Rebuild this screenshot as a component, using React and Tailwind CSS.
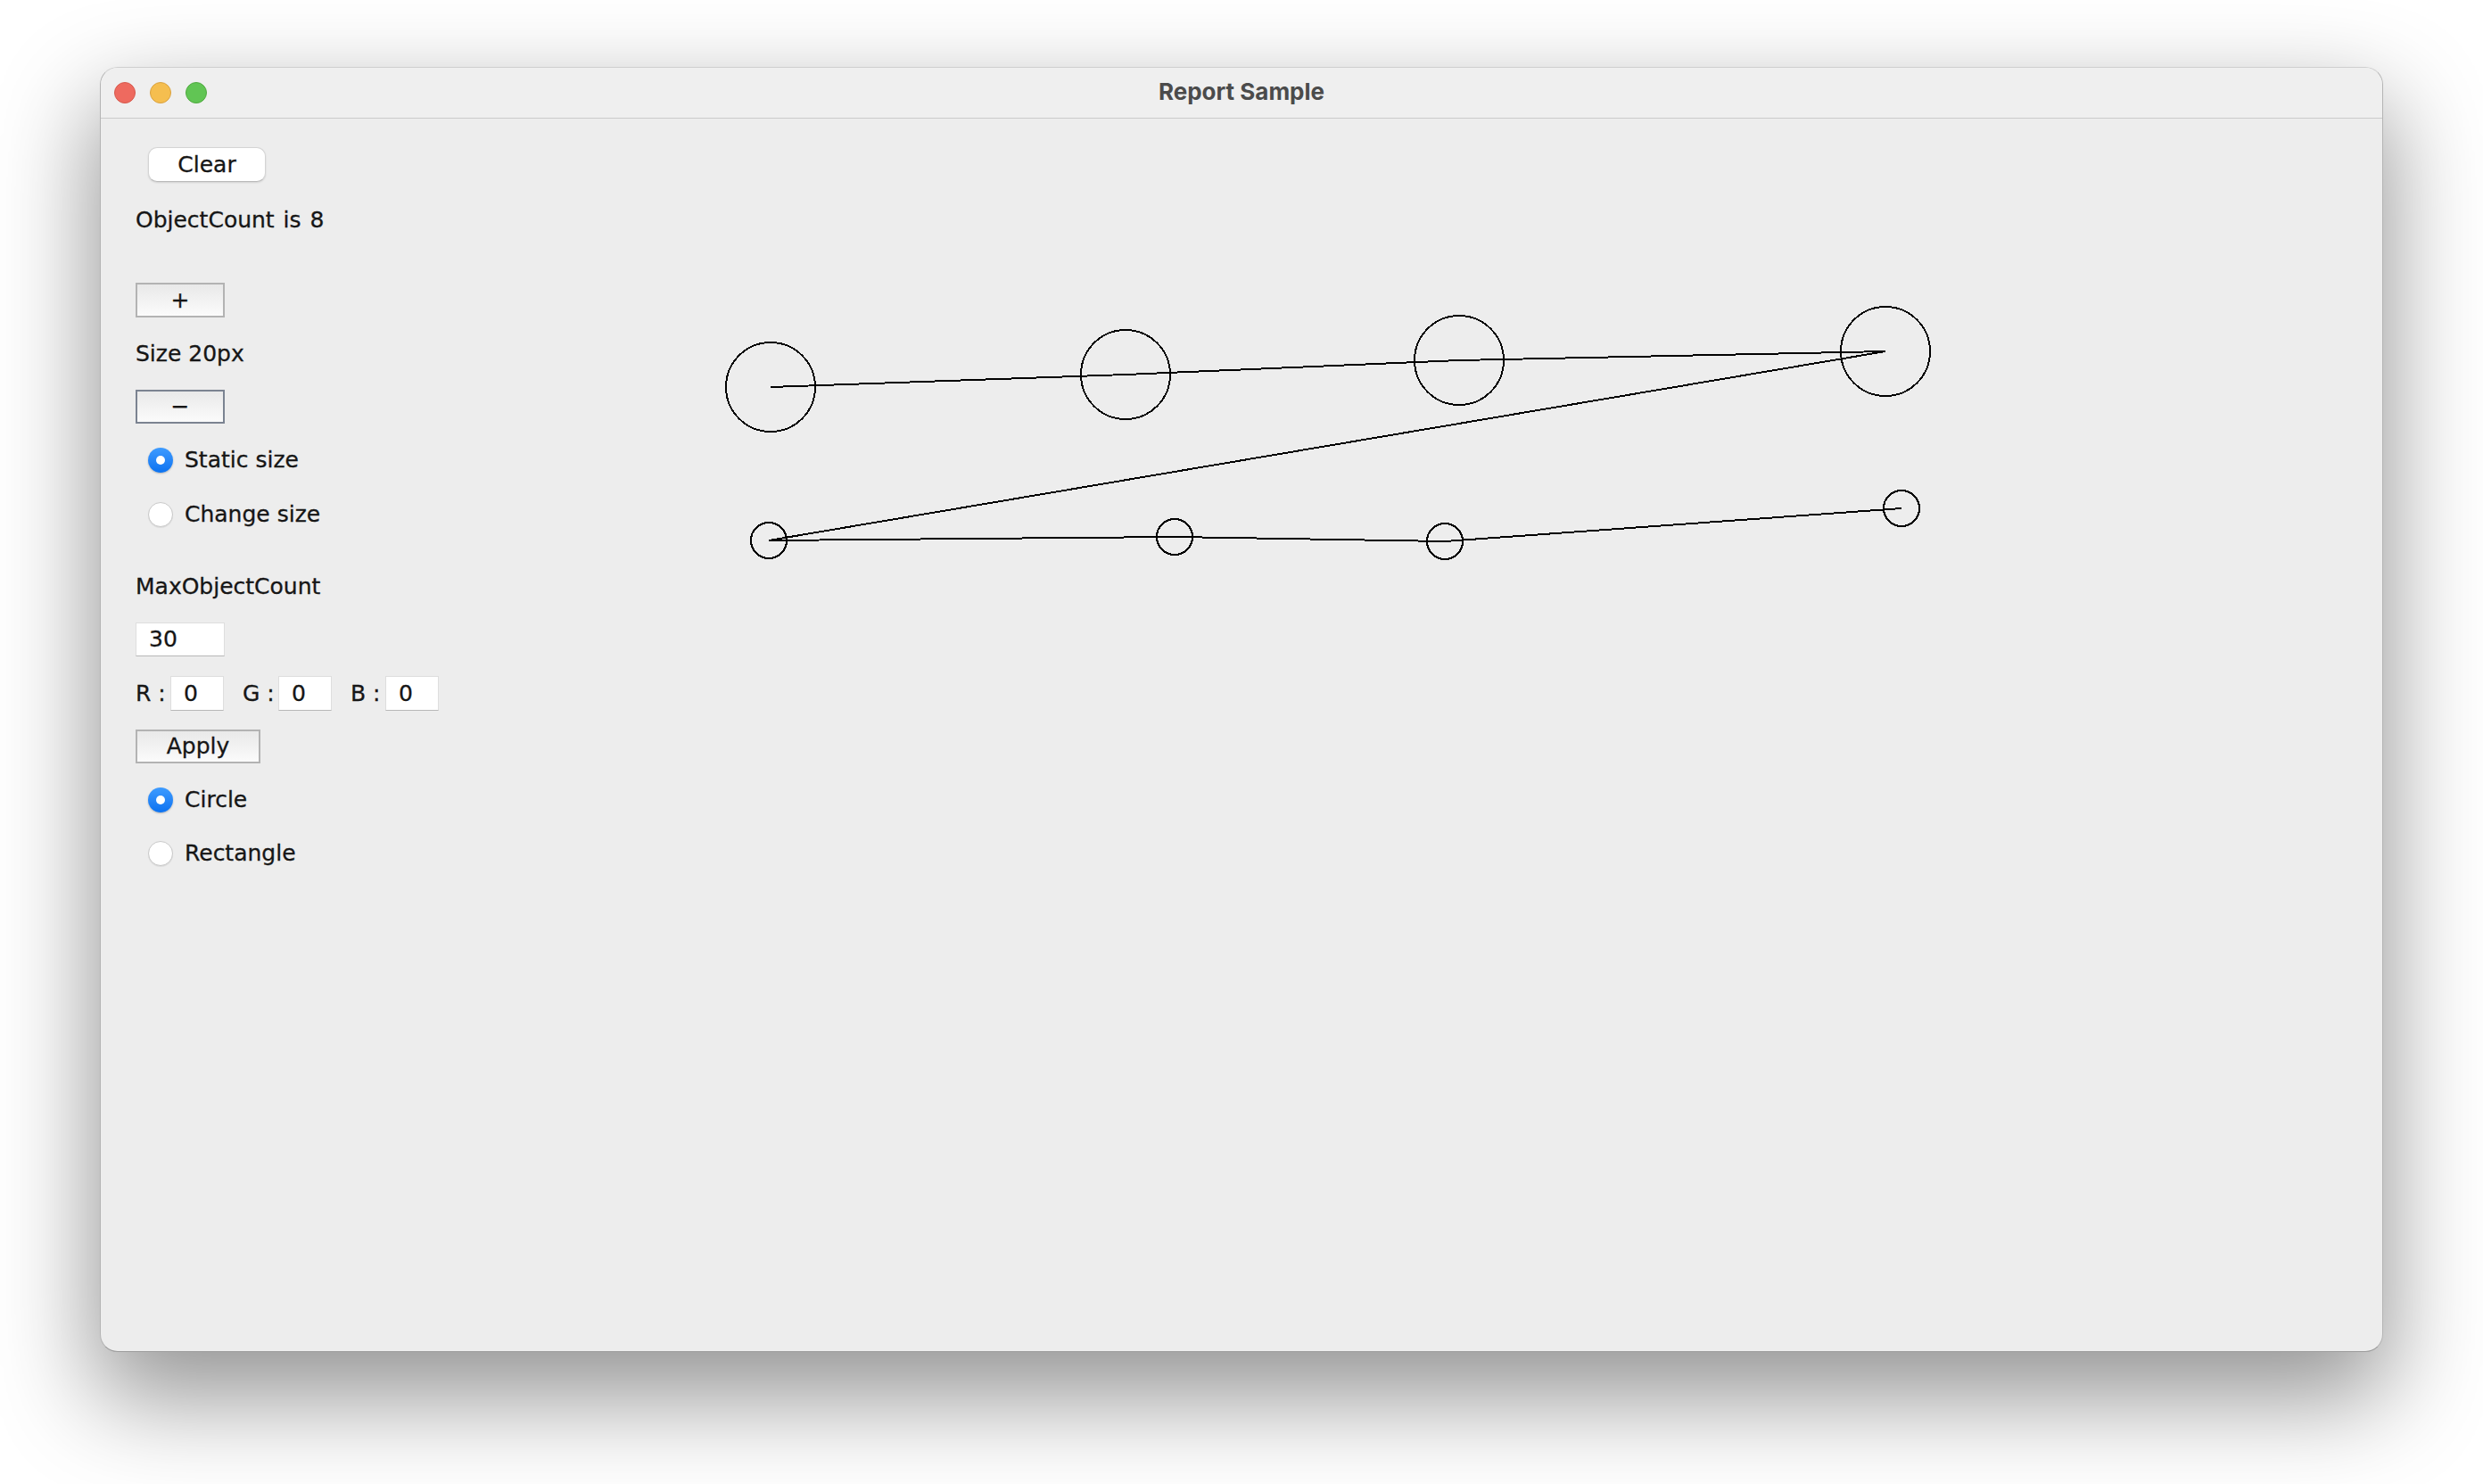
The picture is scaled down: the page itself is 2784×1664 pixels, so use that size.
import React from "react";

// Ventana "Report Sample" (Swing / Aqua) con panel de controles y lienzo de figuras.

const shapes = [
  { x: 412, y: 301, r: 50 },
  { x: 810, y: 287, r: 50 },
  { x: 1184, y: 271, r: 50 },
  { x: 1662, y: 261, r: 50 },
  { x: 410, y: 473, r: 20 },
  { x: 865, y: 469, r: 20 },
  { x: 1168, y: 474, r: 20 },
  { x: 1680, y: 437, r: 20 },
];

function Radio({ checked, label, className }) {
  return (
    <div className={`flex items-center h-[30px] ${className || ""}`}>
      {checked ? (
        <span className="ml-[14px] w-[28px] h-[28px] rounded-full bg-linear-to-b from-[#3d9bff] to-[#0a72f0] shadow-[0_1px_2px_rgba(0,0,0,0.25)] flex items-center justify-center">
          <span className="w-[10px] h-[10px] rounded-full bg-white" />
        </span>
      ) : (
        <span className="ml-[14px] w-[28px] h-[28px] rounded-full bg-white border border-[#c9c9c9] shadow-[0_1px_1px_rgba(0,0,0,0.08)]" />
      )}
      <span className="ml-[13px]">{label}</span>
    </div>
  );
}

function Field({ value, className }) {
  return (
    <div className={`bg-white border border-[#dedede] border-b-[#b8b8b8] flex items-center pl-[14px] ${className || ""}`}>
      {value}
    </div>
  );
}

function AquaButton({ children, className, focused }) {
  return (
    <button
      type="button"
      className={`border-2 ${focused ? "border-[#7b8391]" : "border-[#b3b3b3]"} bg-linear-to-b from-[#e9e9e9] to-[#fbfbfb] flex items-center justify-center text-[#161616] ${className || ""}`}
    >
      {children}
    </button>
  );
}

export default function App() {
  return (
    <div className="w-[2784px] h-[1664px] bg-white overflow-hidden pt-[75px] pl-[112px]">
      <div className="w-[2560px] h-[1441px] rounded-[20px] border border-[#b4b4b4] border-t-[#cfcfcf] border-b-[#9c9c9c] bg-[#ededed] overflow-hidden flex flex-col shadow-[0_46px_110px_6px_rgba(0,0,0,0.42)]">
        {/* barra de título */}
        <div className="h-[57px] shrink-0 bg-[#efefef] border-b border-[#cbcbcb] grid grid-cols-[1fr_auto_1fr] items-center">
          <div className="flex items-center gap-[16px] pl-[15px]">
            <span className="w-[24px] h-[24px] rounded-full bg-[#ee6a5f] border border-[#d6594d]" />
            <span className="w-[24px] h-[24px] rounded-full bg-[#f5be4f] border border-[#d9a13f]" />
            <span className="w-[24px] h-[24px] rounded-full bg-[#61c554] border border-[#4fa93f]" />
          </div>
          <div className="mb-[3px] font-['Inter',sans-serif] font-bold text-[26px] text-[#4b4b4b]">
            Report Sample
          </div>
          <div />
        </div>

        {/* contenido */}
        <div className="flex-1 flex font-['DejaVu_Sans',sans-serif] text-[25px] leading-[30px] text-[#161616] [-webkit-text-stroke:0.3px_#161616]">
          <div className="w-[339px] shrink-0 pl-[39px] flex flex-col items-start">
            <button
              type="button"
              className="mt-[32px] ml-[14px] w-[132px] h-[39px] rounded-[10px] bg-white border border-[#d4d4d4] border-b-[#b9b9b9] shadow-[0_1px_2px_rgba(0,0,0,0.12)] flex items-center justify-center"
            >
              Clear
            </button>
            <div className="mt-[28px] h-[30px] [word-spacing:2px]">ObjectCount is 8</div>
            <AquaButton className="mt-[55px] w-[100px] h-[39px]">+</AquaButton>
            <div className="mt-[26px] h-[30px]">Size 20px</div>
            <AquaButton className="mt-[25px] w-[100px] h-[38px]" focused>
              −
            </AquaButton>
            <Radio checked label="Static size" className="mt-[26px]" />
            <Radio label="Change size" className="mt-[31px]" />
            <div className="mt-[51px] h-[30px]">MaxObjectCount</div>
            <Field value="30" className="mt-[25px] w-[100px] h-[38px]" />
            <div className="mt-[22px] flex items-center h-[39px]">
              <span className="w-[39px]">R :</span>
              <Field value="0" className="w-[60px] h-[39px]" />
              <span className="ml-[21px] w-[40px]">G :</span>
              <Field value="0" className="w-[60px] h-[39px]" />
              <span className="ml-[21px] w-[39px]">B :</span>
              <Field value="0" className="w-[60px] h-[39px]" />
            </div>
            <AquaButton className="mt-[21px] w-[140px] h-[38px]">Apply</AquaButton>
            <Radio checked label="Circle" className="mt-[26px]" />
            <Radio label="Rectangle" className="mt-[30px]" />
          </div>

          {/* lienzo */}
          <div className="flex-1">
            <svg width="100%" height="100%" shapeRendering="crispEdges">
              <polyline
                points={shapes.map((s) => `${s.x},${s.y}`).join(" ")}
                fill="none"
                stroke="#000"
                strokeWidth="2"
              />
              {shapes.map((s, i) => (
                <circle key={i} cx={s.x} cy={s.y} r={s.r} fill="none" stroke="#000" strokeWidth="2" />
              ))}
            </svg>
          </div>
        </div>
      </div>
    </div>
  );
}
